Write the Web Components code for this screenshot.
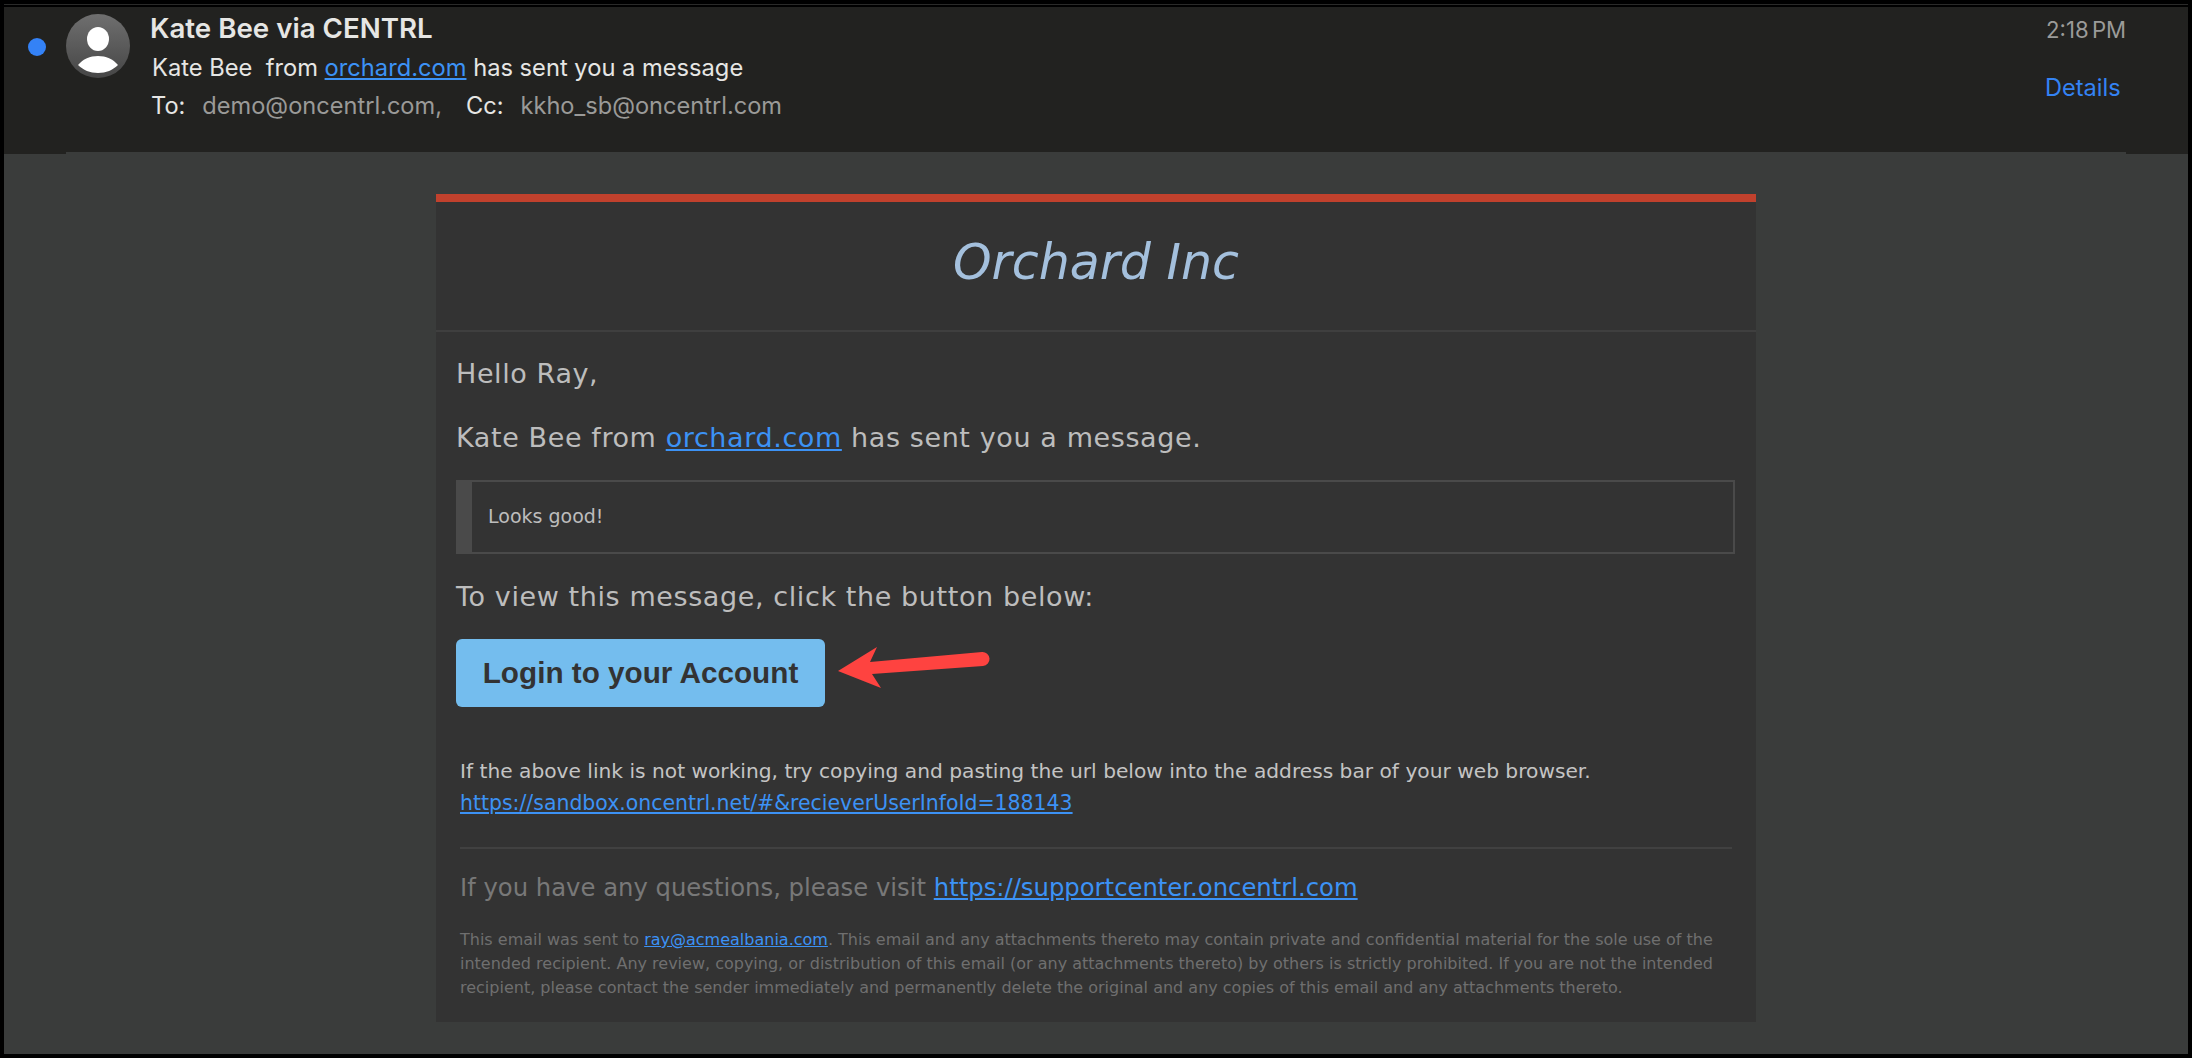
<!DOCTYPE html>
<html>
<head>
<meta charset="utf-8">
<title>Orchard Inc</title>
<style>
  html, body { margin: 0; height: 100%; background: #000; }
</style>
</head>
<body>
<mail-window>
  <mail-header slot="header"></mail-header>
  <email-card>
    <email-para>Hello Ray,</email-para>
    <email-para>Kate Bee from <a href="#" style="color:#3c92f5">orchard.com</a> has sent you a message.</email-para>
    <quote-box>Looks good!</quote-box>
    <email-para>To view this message, click the button below:</email-para>
    <login-button>Login to your Account</login-button>
    <link-note></link-note>
    <email-footer></email-footer>
  </email-card>
</mail-window>

<script>
// outer frame: black edge, header on top, grey body below
class MailWindow extends HTMLElement {
  constructor() {
    super();
    let shadow = this.attachShadow({mode: 'open'});
    shadow.innerHTML = `
    <style>
      :host {
        display: flex;
        flex-direction: column;
        box-sizing: border-box;
        width: 2192px;
        height: 1058px;
        padding: 4px;
        background: #000;
      }
      .topline { height: 1px; margin-bottom: 2px; background: #2a2a29; flex: none; }
      .body {
        flex: 1;
        background: #3a3c3b;
        padding-top: 42px;
        display: flex;
        justify-content: center;
        align-items: flex-start;
        min-height: 0;
      }
    </style>
    <div class="topline"></div>
    <slot name="header"></slot>
    <div class="body"><slot></slot></div>
    `;
  }
}

class MailHeader extends HTMLElement {
  constructor() {
    super();
    let shadow = this.attachShadow({mode: 'open'});
    shadow.innerHTML = `
    <style>
      :host {
        display: flex;
        flex: none;
        box-sizing: border-box;
        height: 145px;
        background: #222220;
        font-family: Inter, "Liberation Sans", sans-serif;
        color: #e6e6e4;
        position: relative;
      }
      .dot {
        width: 18px; height: 18px; border-radius: 50%;
        background: #3482f6;
        margin: 31px 0 0 24px;
        flex: none;
      }
      svg { margin: 7px 0 0 20px; flex: none; }
      .lines { flex: 1; margin-left: 19px; padding-top: 2px; }
      .name { font-size: 27.7px; font-weight: 600; line-height: 38px; margin-left: 1px; }
      .subject { font-size: 23.7px; line-height: 38px; margin-top: 2px; margin-left: 3px; }
      .subject a { color: #3c92f5; }
      .to { display: flex; font-size: 23.6px; line-height: 38px; margin-left: 2px; }
      .to span { color: #9a9a98; margin-left: 17px; }
      .to b { font-weight: 400; margin-left: 24px; }
      .side { width: 142px; flex: none; font-size: 22.2px; padding-top: 6px; }
      .time { color: #9b9b99; line-height: 34px; word-spacing: -3px; }
      .details { color: #3483f3; margin: 24px 0 0 -1px; line-height: 34px; font-size: 23.6px; }
      /* the divider only runs under the middle of the header */
      .notch { position: absolute; bottom: -2px; height: 2px; background: #222220; }
      .notch.l { left: 0; width: 62px; }
      .notch.r { right: 0; width: 62px; }
    </style>
    <div class="dot"></div>
    <svg width="64" height="64" viewBox="0 0 64 64">
      <defs>
        <linearGradient id="av" x1="0" y1="0" x2="0" y2="1">
          <stop offset="0" stop-color="#6f6f6f"/>
          <stop offset="1" stop-color="#464646"/>
        </linearGradient>
      </defs>
      <circle cx="32" cy="32" r="32" fill="url(#av)"/>
      <ellipse cx="32" cy="25" rx="11" ry="12" fill="#fff"/>
      <path d="M12 51 C17 45 24 42 32 42 C40 42 47 45 52 51 C47 56 40 59 32 59 C24 59 17 56 12 51 Z" fill="#fff"/>
    </svg>
    <div class="lines">
      <div class="name">Kate Bee via CENTRL</div>
      <div class="subject">Kate Bee&nbsp; from <a href="#">orchard.com</a> has sent you a message</div>
      <div class="to">To:<span>demo@oncentrl.com,</span><b>Cc:</b><span>kkho_sb@oncentrl.com</span></div>
    </div>
    <div class="side">
      <div class="time">2:18 PM</div>
      <div class="details">Details</div>
    </div>
    <div class="notch l"></div>
    <div class="notch r"></div>
    `;
  }
}

class EmailCard extends HTMLElement {
  constructor() {
    super();
    let shadow = this.attachShadow({mode: 'open'});
    shadow.innerHTML = `
    <style>
      :host {
        display: block;
        box-sizing: border-box;
        width: 1320px;
        height: 828px;
        background: #333;
        border-top: 8px solid #c1412d;
        font-family: "DejaVu Sans", Verdana, sans-serif;
        color: #bdbdbd;
      }
      .brand {
        height: 130px;
        box-sizing: border-box;
        border-bottom: 2px solid #3f3f3f;
        text-align: center;
        font-size: 49px;
        font-style: italic;
        color: #a4c0dd;
        line-height: 122px;
      }
      .content { padding: 23px 20px 0 20px; }
    </style>
    <div class="brand">Orchard Inc</div>
    <div class="content"><slot></slot></div>
    `;
  }
}

class EmailPara extends HTMLElement {
  constructor() {
    super();
    let shadow = this.attachShadow({mode: 'open'});
    shadow.innerHTML = `
    <style>
      :host { display: block; font-size: 27px; letter-spacing: .6px; line-height: 38px; margin-bottom: 26px; }
    </style>
    <slot></slot>
    `;
  }
}

class QuoteBox extends HTMLElement {
  constructor() {
    super();
    let shadow = this.attachShadow({mode: 'open'});
    shadow.innerHTML = `
    <style>
      :host {
        display: block;
        box-sizing: border-box;
        width: 1279px;
        height: 74px;
        border: 2px solid #4a4a4a;
        border-left-width: 16px;
        padding-left: 16px;
        font-size: 19px;
        line-height: 68px;
        color: #bdbdbd;
        margin: -3px 0 24px 0;
      }
    </style>
    <slot></slot>
    `;
  }
}

class LoginButton extends HTMLElement {
  constructor() {
    super();
    let shadow = this.attachShadow({mode: 'open'});
    shadow.innerHTML = `
    <style>
      :host { display: block; position: relative; height: 68px; margin-top: -3px; }
      .btn {
        display: flex;
        align-items: center;
        justify-content: center;
        width: 369px;
        height: 68px;
        border-radius: 6px;
        background: #74bdee;
        color: #333;
        font: bold 29.7px "Liberation Sans", Arial, sans-serif;
      }
      svg { position: absolute; left: 376px; top: 0; }
    </style>
    <div class="btn"><slot></slot></div>
    <svg width="160" height="68" viewBox="0 0 160 68">
      <path d="M6 32 L45 8 L38 23 L150 13 A7 7 0 0 1 151 27 L40 35 L49 49 Z" fill="#fe4340"/>
    </svg>
    `;
  }
}

class LinkNote extends HTMLElement {
  constructor() {
    super();
    let shadow = this.attachShadow({mode: 'open'});
    shadow.innerHTML = `
    <style>
      :host { display: block; font-size: 20.2px; line-height: 32px; margin: 48px 0 0 4px; color: #c4c4c4; }
      a { color: #3c92f5; display: block; font-size: 20.45px; }
    </style>
    If the above link is not working, try copying and pasting the url below into the address bar of your web browser.
    <a href="#">https://sandbox.oncentrl.net/#&amp;recieverUserInfoId=188143</a>
    `;
  }
}

class EmailFooter extends HTMLElement {
  constructor() {
    super();
    let shadow = this.attachShadow({mode: 'open'});
    shadow.innerHTML = `
    <style>
      :host { display: block; width: 1272px; margin: 28px 0 0 4px; border-top: 2px solid #414141; }
      .ask { font-size: 24.3px; line-height: 38px; color: #787878; margin-top: 20px; }
      .legal { font-size: 16px; line-height: 24px; color: #6f6f6f; margin-top: 21px; white-space: nowrap; }
      a { color: #3c92f5; }
    </style>
    <div class="ask">If you have any questions, please visit <a href="#">https://supportcenter.oncentrl.com</a></div>
    <div class="legal">
      <div>This email was sent to <a href="#">ray@acmealbania.com</a>. This email and any attachments thereto may contain private and confidential material for the sole use of the</div>
      <div>intended recipient. Any review, copying, or distribution of this email (or any attachments thereto) by others is strictly prohibited. If you are not the intended</div>
      <div>recipient, please contact the sender immediately and permanently delete the original and any copies of this email and any attachments thereto.</div>
    </div>
    `;
  }
}

customElements.define('mail-window', MailWindow);
customElements.define('mail-header', MailHeader);
customElements.define('email-card', EmailCard);
customElements.define('email-para', EmailPara);
customElements.define('quote-box', QuoteBox);
customElements.define('login-button', LoginButton);
customElements.define('link-note', LinkNote);
customElements.define('email-footer', EmailFooter);
</script>
</body>
</html>
